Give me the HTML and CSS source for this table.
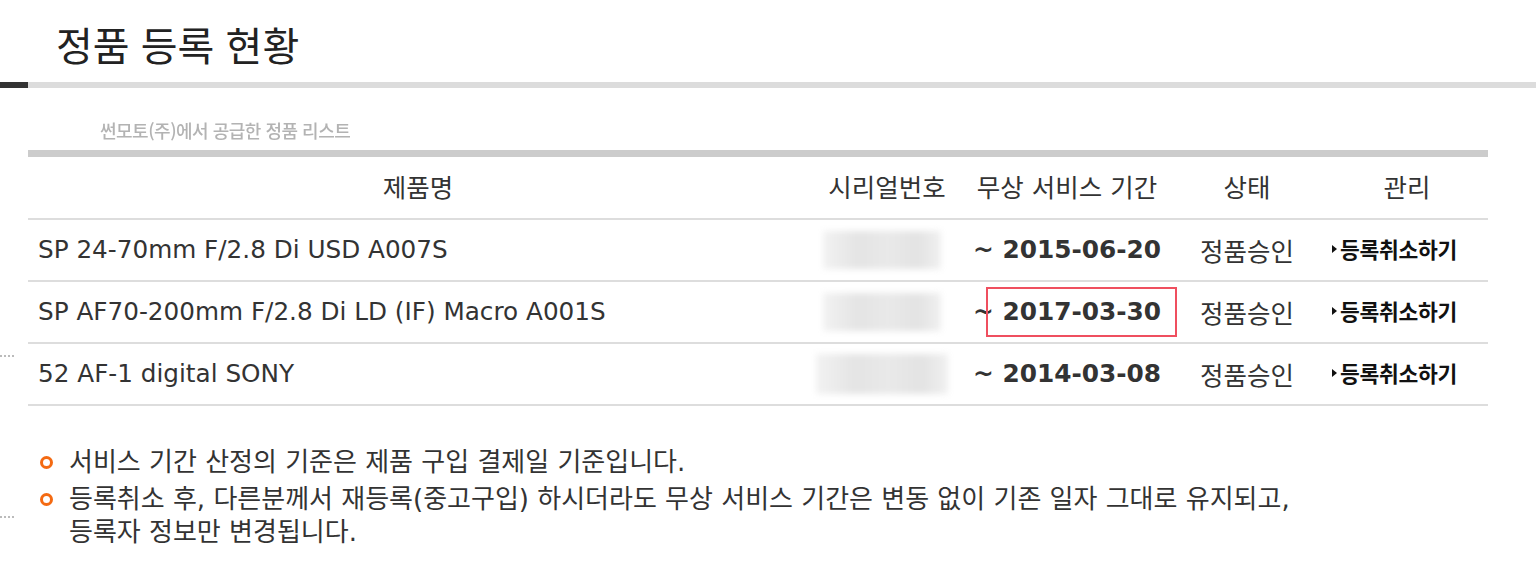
FILE: index.html
```html
<!DOCTYPE html>
<html lang="ko">
<head>
<meta charset="utf-8">
<title>정품 등록 현황</title>
<link rel="stylesheet" href="styles.css">
</head>
<body>
<div class="page">
  <h1 class="title">정품 등록 현황</h1>
  <div class="title-bar"><span class="title-bar-accent"></span></div>
  <div class="content">
    <p class="subtitle">썬모토(주)에서 공급한 정품 리스트</p>
    <table class="list">
      <thead>
        <tr>
          <th class="col-name">제품명</th>
          <th class="col-serial">시리얼번호</th>
          <th class="col-period">무상 서비스 기간</th>
          <th class="col-status">상태</th>
          <th class="col-manage">관리</th>
        </tr>
      </thead>
      <tbody>
        <tr>
          <td class="cell-name">SP 24-70mm F/2.8 Di USD A007S</td>
          <td class="cell-serial"><span class="serial-blur"></span></td>
          <td class="cell-period">~ <span class="date">2015-06-20</span></td>
          <td class="cell-status">정품승인</td>
          <td class="cell-manage"><a class="cancel-link"><span class="arrow"></span>등록취소하기</a></td>
        </tr>
        <tr>
          <td class="cell-name">SP AF70-200mm F/2.8 Di LD (IF) Macro A001S</td>
          <td class="cell-serial"><span class="serial-blur"></span></td>
          <td class="cell-period">~ <span class="date date-highlight">2017-03-30</span></td>
          <td class="cell-status">정품승인</td>
          <td class="cell-manage"><a class="cancel-link"><span class="arrow"></span>등록취소하기</a></td>
        </tr>
        <tr>
          <td class="cell-name">52 AF-1 digital SONY</td>
          <td class="cell-serial"><span class="serial-blur serial-wide"></span></td>
          <td class="cell-period">~ <span class="date">2014-03-08</span></td>
          <td class="cell-status">정품승인</td>
          <td class="cell-manage"><a class="cancel-link"><span class="arrow"></span>등록취소하기</a></td>
        </tr>
      </tbody>
    </table>
    <ul class="notes">
      <li class="note"><span class="bullet"></span><span class="note-text">서비스 기간 산정의 기준은 제품 구입 결제일 기준입니다.</span></li>
      <li class="note"><span class="bullet"></span><span class="note-text">등록취소 후, 다른분께서 재등록(중고구입) 하시더라도 무상 서비스 기간은 변동 없이 기존 일자 그대로 유지되고,<br>등록자 정보만 변경됩니다.</span></li>
    </ul>
  </div>
  <span class="side-dots side-dots-1"></span>
  <span class="side-dots side-dots-2"></span>
</div>
</body>
</html>
```

FILE: styles.css
```css
html, body {
  margin: 0;
  padding: 0;
  background: #fff;
}

.page {
  position: relative;
  width: 1536px;
  height: 588px;
  overflow: hidden;
  font-family: "DejaVu Sans", "Noto Sans CJK KR", sans-serif;
  color: #333;
}

.title {
  margin: 0;
  height: 82px;
  box-sizing: border-box;
  padding: 8px 0 0 56px;
  font-family: "Noto Sans CJK KR", sans-serif;
  font-weight: 400;
  font-size: 40px;
  line-height: 72px;
  color: #222;
  letter-spacing: 0;
}

.title-bar {
  display: flex;
  height: 6px;
  background: #dcdcdc;
}

.title-bar-accent {
  width: 28px;
  background: #333;
}

.content {
  width: 1460px;
  margin-left: 28px;
}

.subtitle {
  margin: 31px 0 9px 72px;
  font-family: "Noto Sans CJK KR", sans-serif;
  font-size: 18px;
  font-weight: 500;
  line-height: 22px;
  letter-spacing: -0.5px;
  color: #b3b3b3;
  filter: blur(0.4px);
}

.list {
  width: 1460px;
  border-collapse: collapse;
  border-top: 7px solid #cccccc;
  table-layout: fixed;
}

.list th,
.list td {
  padding: 0;
  vertical-align: middle;
}

.list th {
  height: 65px;
  font-weight: 400;
  font-size: 25.5px;
  color: #333;
  text-align: center;
  border-bottom: 2px solid #dddddd;
  padding-bottom: 4px;
  box-sizing: border-box;
}

.col-name { width: 780px; }
.col-serial { width: 158px; }
.col-period { width: 202px; }
.col-status { width: 158px; }
.col-manage { width: 162px; }

.list td {
  height: 60px;
  border-bottom: 2px solid #dddddd;
  font-size: 24.7px;
  color: #333;
}

.cell-name {
  padding-left: 10px !important;
  text-align: left;
}

.cell-serial {
  text-align: center;
}

.serial-blur {
  display: inline-block;
  vertical-align: middle;
  width: 118px;
  height: 38px;
  margin-left: -10px;
  background: linear-gradient(90deg, #f2f2f2 0%, #e4e4e4 30%, #e9e9e9 55%, #e3e3e3 80%, #f0f0f0 100%);
  filter: blur(3px);
}

.serial-wide {
  width: 132px;
  height: 40px;
  margin-left: -10px;
}

.cell-period {
  text-align: center;
  font-weight: 700;
  font-size: 24.8px !important;
}

.date {
  font-weight: 700;
}

.date-highlight {
  display: inline-block;
  line-height: 46px;
  padding: 0 14px;
  margin: 0 -16px;
  border: 2px solid #ef4f5f;
}

.cell-status {
  text-align: center;
  font-size: 25.5px !important;
}

.list td.cell-manage {
  text-align: left;
  height: 54px;
  padding: 0 0 6px 6px;
  line-height: 1;
}

.cancel-link {
  display: inline-flex;
  align-items: center;
  font-family: "Noto Sans CJK KR", sans-serif;
  font-weight: 700;
  font-size: 21.5px;
  color: #111;
  letter-spacing: -0.3px;
  cursor: pointer;
}

.arrow {
  width: 0;
  height: 0;
  border-top: 4px solid transparent;
  border-bottom: 4px solid transparent;
  border-left: 5px solid #111;
  margin-right: 3px;
}

.notes {
  list-style: none;
  margin: 40px 0 0 0;
  padding: 0 0 0 12px;
  display: flex;
  flex-direction: column;
  gap: 4px;
}

.note {
  display: flex;
  gap: 16px;
  font-size: 26px;
  line-height: 33px;
  color: #333;
}

.bullet {
  flex: none;
  width: 13px;
  height: 13px;
  box-sizing: border-box;
  border: 3.5px solid #f46a12;
  border-radius: 50%;
  margin-top: 10px;
}

.side-dots {
  position: absolute;
  left: 0;
  width: 14px;
  height: 0;
  border-top: 2px dotted #bbbbbb;
}

.side-dots-1 { top: 355px; }
.side-dots-2 { top: 516px; }
```
